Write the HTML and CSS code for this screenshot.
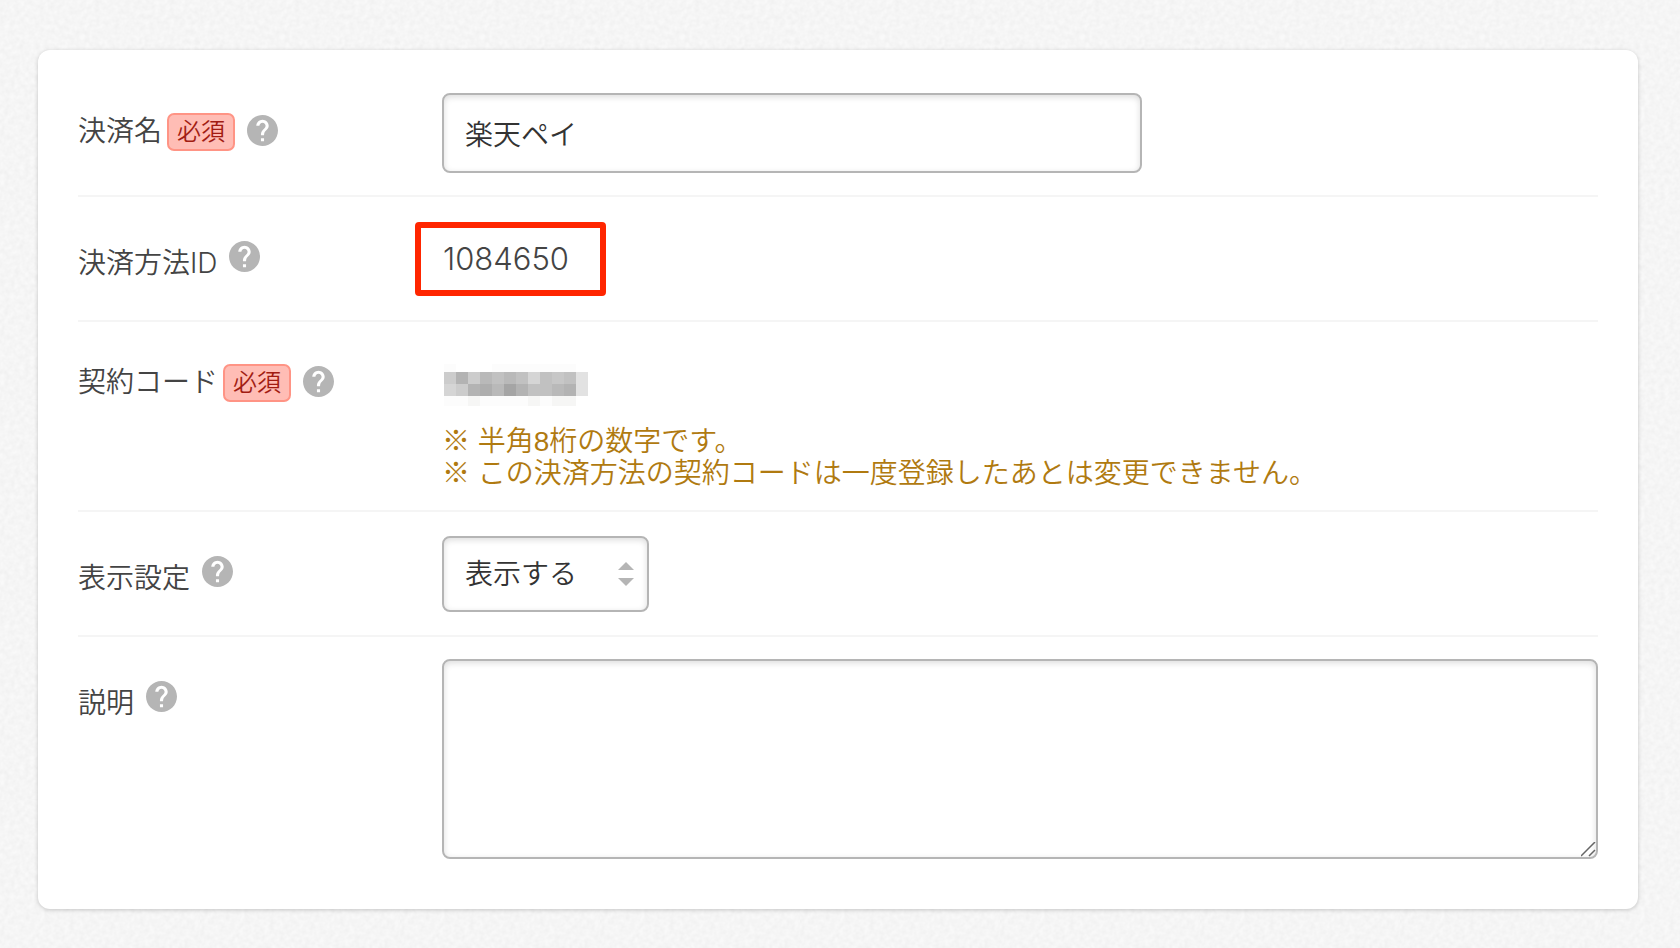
FILE: index.html
```html
<!DOCTYPE html>
<html lang="ja">
<head>
    <meta charset="UTF-8">
    <meta name="viewport" content="width=device-width, initial-scale=1.0">
    <title>決済方法の設定</title>
    <link rel="stylesheet" href="styles.css">
</head>
<body>
    <svg class="symbols" aria-hidden="true">
        <symbol id="help" viewBox="2 2 20 20">
            <path fill="currentColor" d="M12 2C6.48 2 2 6.48 2 12s4.48 10 10 10 10-4.48 10-10S17.52 2 12 2zm1 17h-2v-2h2v2zm2.07-7.75l-.9.92C13.45 12.9 13 13.5 13 15h-2v-.5c0-1.1.45-2.1 1.17-2.83l1.24-1.26c.37-.36.59-.86.59-1.41 0-1.1-.9-2-2-2s-2 .9-2 2H8c0-2.21 1.79-4 4-4s4 1.79 4 4c0 .88-.36 1.68-.93 2.25z"/>
        </symbol>
    </svg>

    <form class="card">
        <div class="row">
            <div class="row-label">
                <label for="name">決済名</label>
                <span class="required">必須</span>
                <button type="button" class="help" aria-label="ヘルプ"><svg><use href="#help"/></svg></button>
            </div>
            <div class="row-body">
                <input type="text" id="name" class="text-box" value="楽天ペイ" required>
            </div>
        </div>

        <div class="row">
            <div class="row-label plain">
                <span class="title">決済方法ID</span>
                <button type="button" class="help" aria-label="ヘルプ"><svg><use href="#help"/></svg></button>
            </div>
            <div class="row-body">
                <span class="payment-id">1084650</span>
            </div>
        </div>

        <div class="row">
            <div class="row-label">
                <span class="title">契約コード</span>
                <span class="required">必須</span>
                <button type="button" class="help" aria-label="ヘルプ"><svg><use href="#help"/></svg></button>
            </div>
            <div class="row-body">
                <!-- 契約コードは伏せて表示 -->
                <svg class="mask" width="168" height="42" viewBox="0 0 168 42" shape-rendering="crispEdges" aria-hidden="true">
                    <path fill="#fcfcfc" d="M12 0h12v8H12zM60 0h36v8H60zM96 0h48v8H96zM12 32h132v10H12z"/>
                    <path fill="#f6f6f5" d="M36 32h12v10H36zM96 32h12v10H96zM120 32h24v10h-24z"/>
                    <path fill="#cccccc" d="M12 8h12v12H12zM36 8h12v12H36zM24 20h12v12H24z"/>
                    <path fill="#b3b3b3" d="M24 8h12v12H24zM36 20h12v12H36zM84 20h12v12H84zM132 20h12v12h-12z"/>
                    <path fill="#b9b9b9" d="M48 8h12v12H48zM72 8h12v12H72zM60 20h12v12H60zM120 20h12v12h-12z"/>
                    <path fill="#c1c1c1" d="M60 8h12v12H60zM84 8h12v12H84zM108 8h12v12h-12zM132 8h12v12h-12zM96 20h24v12H96z"/>
                    <path fill="#d5d5d5" d="M96 8h12v12H96zM12 20h12v12H12z"/>
                    <path fill="#c7c7c7" d="M120 8h12v12h-12z"/>
                    <path fill="#aeaeae" d="M48 20h12v12H48z"/>
                    <path fill="#a5a5a5" d="M72 20h12v12H72z"/>
                    <path fill="#e2e2e2" d="M144 8h12v24h-12z"/>
                </svg>
                <p class="note">※ 半角8桁の数字です。<br>※ この決済方法の契約コードは一度登録したあとは変更できません。</p>
            </div>
        </div>

        <div class="row">
            <div class="row-label plain">
                <label for="display">表示設定</label>
                <button type="button" class="help" aria-label="ヘルプ"><svg><use href="#help"/></svg></button>
            </div>
            <div class="row-body">
                <select id="display" class="select-box">
                    <option>表示する</option>
                </select>
            </div>
        </div>

        <div class="row">
            <div class="row-label plain">
                <label for="description">説明</label>
                <button type="button" class="help" aria-label="ヘルプ"><svg><use href="#help"/></svg></button>
            </div>
            <div class="row-body">
                <textarea id="description" class="text-area"></textarea>
            </div>
        </div>
    </form>
</body>
</html>
```

FILE: styles.css
```css
* {
    box-sizing: border-box;
}
body {
    margin: 0;
    padding: 50px 42px 39px 38px;
    font-family: Inter, "Noto Sans CJK JP", sans-serif;
    font-size: 28px;
    font-weight: 350;
    line-height: 32px;
    color: #444;
    background-color: #f9f9f9;
    background-image: url("data:image/svg+xml,%3Csvg xmlns='http://www.w3.org/2000/svg' width='200' height='200'%3E%3Cfilter id='n'%3E%3CfeTurbulence type='fractalNoise' baseFrequency='.2' numOctaves='2' stitchTiles='stitch'/%3E%3CfeColorMatrix values='0 0 0 0 0 0 0 0 0 0 0 0 0 0 0 .05 0 0 0 -.01'/%3E%3C/filter%3E%3Crect width='200' height='200' filter='url(%23n)'/%3E%3C/svg%3E");
}
.symbols {
    display: none;
}
.card {
    padding: 21px 40px 28px;
    background: #fff;
    border-radius: 12px;
    box-shadow: 0 1px 4px rgba(0, 0, 0, 0.2);
}
.row {
    display: grid;
    grid-template-columns: 364px 1fr;
    min-height: 125px;
    padding: 22px 0;
    border-bottom: 2px solid #f5f5f5;
}
.row:last-child {
    border-bottom: 0;
}
.row-label {
    display: flex;
    align-items: center;
    height: 74px;
}
.row-label label,
.row-label .title {
    padding-top: 2px;
}
.plain label,
.plain .title {
    padding-top: 14px;
}
.row-body {
    min-width: 0;
}
.required {
    margin-left: 5px;
    margin-top: 3px;
    padding: 0 8px;
    font-size: 24px;
    line-height: 34px;
    color: #a21c12;
    background: #ffbdb5;
    border: 2px solid #ff9485;
    border-radius: 7px;
}
.help {
    width: 31px;
    height: 31px;
    margin-left: 12px;
    padding: 0;
    color: #b5b5b5;
    background: none;
    border: 0;
    cursor: pointer;
}
.help svg {
    display: block;
    width: 100%;
    height: 100%;
}

/* 入力欄 */
.text-box,
.select-box,
.text-area {
    display: block;
    font: inherit;
    color: #333;
    background-color: #fff;
    border: 2px solid #b5b5b5;
    border-radius: 8px;
    box-shadow: inset 0 2px 6px rgba(0, 0, 0, 0.14);
}
.text-box {
    width: 700px;
    max-width: 100%;
    height: 80px;
    padding: 0 21px;
}
.select-box {
    height: 76px;
    width: 207px;
    margin-top: 2px;
    padding: 0 50px 0 21px;
    appearance: none;
    background-image: url("data:image/svg+xml,%3Csvg xmlns='http://www.w3.org/2000/svg' width='16' height='24'%3E%3Cpath fill='%23b5b5b5' d='M0 8 8 0l8 8zM0 16h16l-8 8z'/%3E%3C/svg%3E");
    background-repeat: no-repeat;
    background-position: right 13px center;
}
.text-area {
    width: 100%;
    height: 200px;
    padding: 16px 21px;
    resize: vertical;
}
.text-area::-webkit-resizer {
    background: url("data:image/svg+xml,%3Csvg xmlns='http://www.w3.org/2000/svg' width='15' height='15'%3E%3Cpath stroke='%23666' stroke-width='1.5' d='M0 14 14 0M8 14l6-6'/%3E%3C/svg%3E") no-repeat;
}

.payment-id {
    display: inline-block;
    margin: 3px 0 0 -27px;
    padding: 0 31px 0 22px;
    font-size: 31px;
    line-height: 62px;
    border: 6px solid #ff2600;
    border-radius: 4px;
}
.mask {
    display: block;
    margin: 20px 0 0 -10px;
}
.note {
    margin: 20px 0 -2px;
    font-family: "Liberation Sans", "Noto Sans CJK JP", sans-serif;
    color: #b07a10;
}
```
